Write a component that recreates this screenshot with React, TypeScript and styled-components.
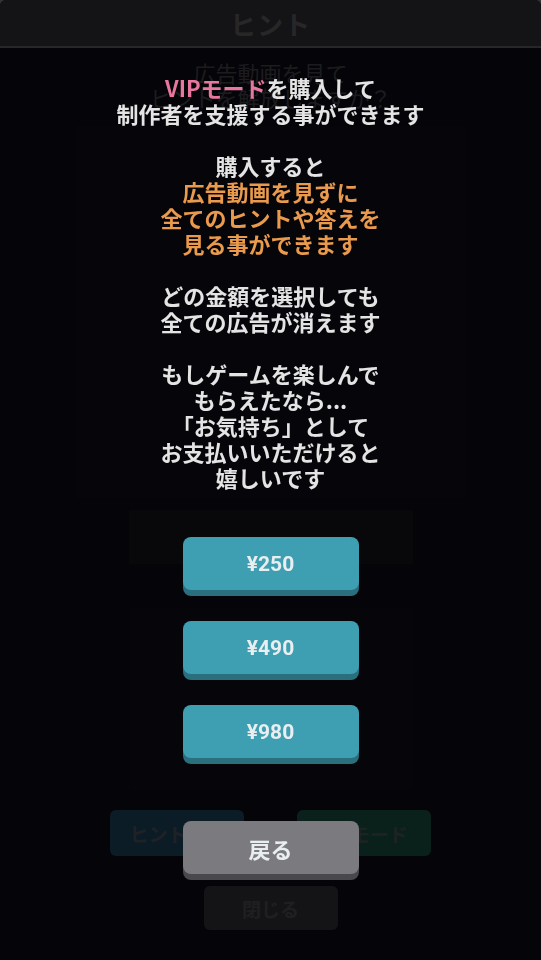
import * as React from "react";
import styled, { createGlobalStyle } from "styled-components";

const GlobalStyle = createGlobalStyle`
  html, body {
    margin: 0;
    padding: 0;
    background: #ffffff;
  }
  body {
    font-family: "Noto Sans CJK JP", "Noto Sans", sans-serif;
  }
`;

const prices = ["¥250", "¥490", "¥980"];

export default function App() {
  return (
    <>
      <GlobalStyle />
      <HintDialog>
        <DialogHeader>ヒント</DialogHeader>
        <DialogBody>
          <Question>
            広告動画を見て
            <br />
            ヒントを解放しますか？
          </Question>
          <ImageCard />
          <AnswerBox />
          <DetailBox />
          <ActionRow>
            <ActionButton tone="blue">ヒント確認</ActionButton>
            <ActionButton tone="green">VIPモード</ActionButton>
          </ActionRow>
          <CloseButton>閉じる</CloseButton>
        </DialogBody>
      </HintDialog>

      <Overlay>
        <Message>
          <Pink>VIPモード</Pink>を購入して
          <br />
          制作者を支援する事ができます
          <br />
          <br />
          購入すると
          <br />
          <Orange>
            広告動画を見ずに
            <br />
            全てのヒントや答えを
            <br />
            見る事ができます
          </Orange>
          <br />
          <br />
          どの金額を選択しても
          <br />
          全ての広告が消えます
          <br />
          <br />
          もしゲームを楽しんで
          <br />
          もらえたなら...
          <br />
          「お気持ち」として
          <br />
          お支払いいただけると
          <br />
          嬉しいです
        </Message>
        <PriceList>
          {prices.map((p) => (
            <PriceButton key={p} variant="teal">
              {p}
            </PriceButton>
          ))}
        </PriceList>
        <BackButton variant="gray">戻る</BackButton>
      </Overlay>
    </>
  );
}

/* ---------- underlying hint dialog (dimmed by overlay) ---------- */

const HintDialog = styled.div`
  width: 541px;
  height: 960px;
  background: #19142a;
  border-radius: 6px 6px 0 0;
  overflow: hidden;
  display: flex;
  flex-direction: column;
`;

const DialogHeader = styled.div`
  height: 46px;
  background: #64646e;
  border-bottom: 2px solid #c4c4cc;
  display: flex;
  align-items: center;
  justify-content: center;
  font-size: 26px;
  font-weight: 700;
  color: #c0c0c8;
  letter-spacing: 1px;
`;

const DialogBody = styled.div`
  display: flex;
  flex-direction: column;
  align-items: center;
  padding-top: 12px;
`;

const Question = styled.div`
  font-size: 22px;
  line-height: 25px;
  text-align: center;
  color: #8a8a96;
`;

const ImageCard = styled.div`
  margin-top: 16px;
  width: 390px;
  height: 372px;
  background: #221d31;
`;

const AnswerBox = styled.div`
  margin-top: 12px;
  width: 284px;
  height: 54px;
  background: #2c2936;
`;

const DetailBox = styled.div`
  margin-top: 44px;
  width: 284px;
  height: 182px;
  background: #211c30;
`;

const ActionRow = styled.div`
  margin-top: 20px;
  display: flex;
  gap: 53px;
`;

const ActionButton = styled.div<{ tone: "blue" | "green" }>`
  width: 134px;
  height: 46px;
  border-radius: 6px;
  background: ${(p) => (p.tone === "blue" ? "#3a8ac4" : "#35a084")};
  color: #9aaab4;
  font-size: 19px;
  font-weight: 700;
  display: flex;
  align-items: center;
  justify-content: center;
`;

const CloseButton = styled.div`
  margin-top: 30px;
  width: 134px;
  height: 44px;
  border-radius: 6px;
  background: #67636e;
  color: #9a9aa0;
  font-size: 19px;
  font-weight: 700;
  display: flex;
  align-items: center;
  justify-content: center;
`;

/* ---------- VIP overlay ---------- */

const Overlay = styled.div`
  position: fixed;
  inset: 0;
  width: 541px;
  height: 960px;
  background: rgba(0, 0, 0, 0.8);
  display: flex;
  flex-direction: column;
  align-items: center;
  padding-top: 74px;
  box-sizing: border-box;
`;

const Message = styled.p`
  margin: 0;
  font-size: 22px;
  line-height: 26px;
  font-weight: 700;
  text-align: center;
  color: #e4e4e4;
`;

const Pink = styled.span`
  color: #e8779e;
`;

const Orange = styled.span`
  color: #e99a4c;
`;

const PriceList = styled.div`
  margin-top: 47px;
  display: flex;
  flex-direction: column;
  gap: 31px;
`;

const palette = {
  teal: { face: "#3e9fb2", edge: "#2a6f7d" },
  gray: { face: "#7b7a7e", edge: "#49484c" },
};

const ChunkyButton = styled.div<{ variant: "teal" | "gray" }>`
  width: 176px;
  height: 53px;
  border-radius: 8px;
  background: ${(p) => palette[p.variant].face};
  box-shadow: 0 6px 0 ${(p) => palette[p.variant].edge};
  color: #e9eef0;
  font-weight: 700;
  display: flex;
  align-items: center;
  justify-content: center;
`;

const PriceButton = styled(ChunkyButton)`
  font-family: Roboto, "Noto Sans CJK JP", sans-serif;
  font-size: 21px;
`;

const BackButton = styled(ChunkyButton)`
  margin-top: 63px;
  font-size: 22px;
`;
